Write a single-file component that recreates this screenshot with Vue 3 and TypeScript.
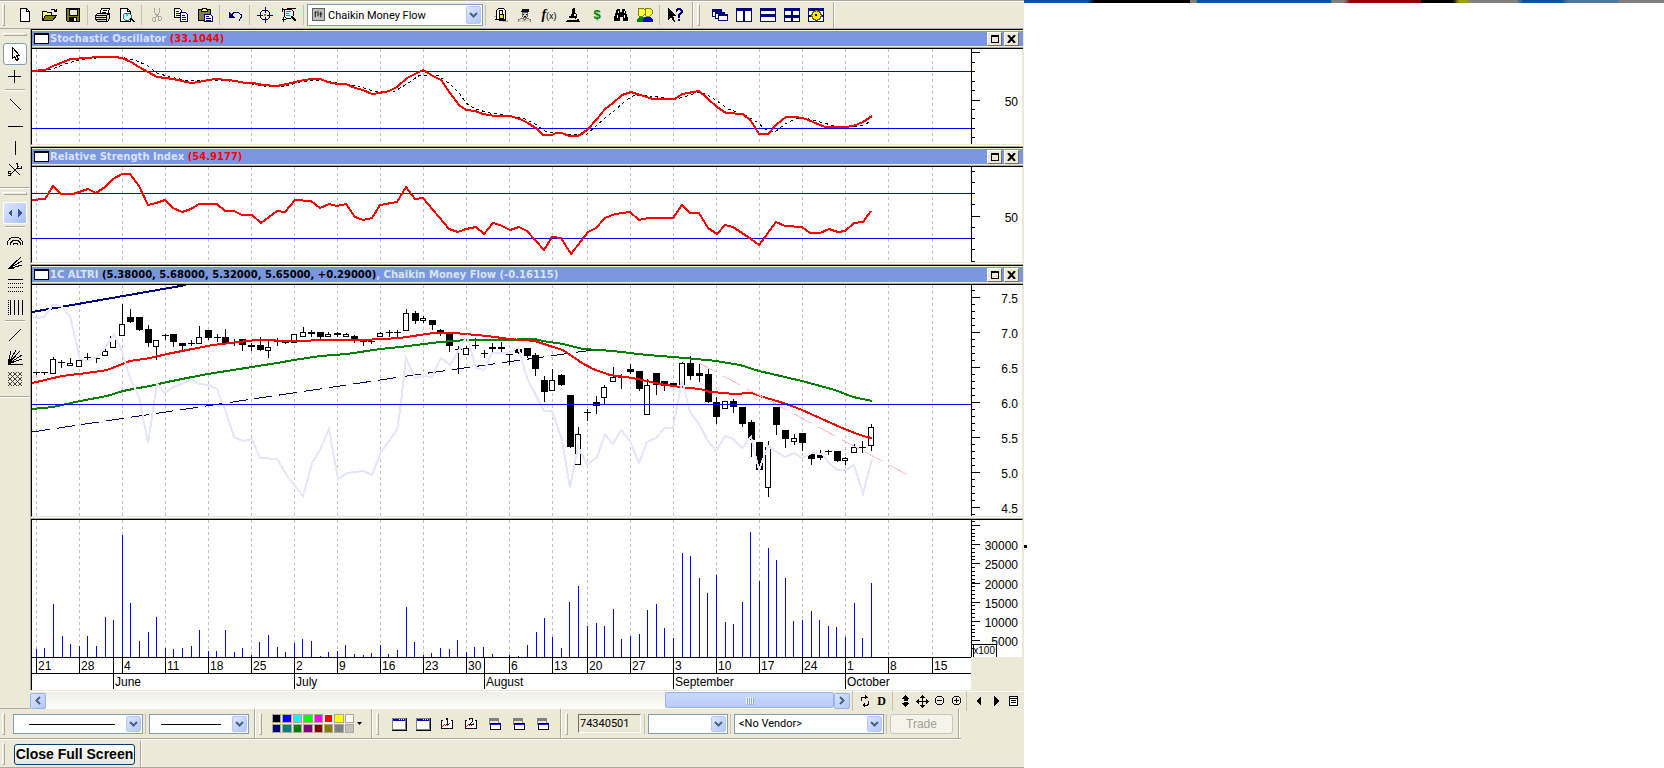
<script setup lang="ts">
import { ref } from 'vue'

type Shape = [d: string, fill: string, stroke?: string]
type Tool = { icon: string; label: string } | null
type Candle = [x: number, high: number, top: number, bottom: number, low: number, kind: 'f' | 'h' | 'c']

const icons: Record<string, Shape[]> = {
  fresh: [['M3.5 1.5h6l3 3v10h-9z', '#fff', '#000'], ['M9.5 1.5v3h3', 'none', '#000']],
  open: [
    ['M1.5 13.5v-9h4l1 1h4v3', '#ffff80', '#000'],
    ['M1.5 13.5l3-5h11l-4 5z', '#808000', '#000'],
    ['M9.5 3.5l1-1h3l1 2M15.5 2v3M12.5 4.5h3', 'none', '#000'],
  ],
  save: [
    ['M1.5 1.5h13v13h-12l-1-1z', '#808000', '#000'],
    ['M4 2h8v6h-8z', '#ece9d8', '#000'],
    ['M4 10h8v4h-8z', '#000'],
    ['M9 11h2v3h-2z', '#ece9d8'],
  ],
  print: [
    ['M4.5 7.5l2-6h8l-2 6z', '#fff', '#000'],
    ['M8 3.5h4M7 5.5h4', 'none', '#000'],
    ['M.5 8.5l2-2h12v5l-2 3h-10l-2-2z', '#d8d4c4', '#000'],
    ['M.5 8.5h11v6M11.5 8.5l3-2M.5 10.5h11M.5 12.5h11', 'none', '#000'],
    ['M8 9h3v1h-3z', '#ffff00'],
  ],
  preview: [
    ['M1.5 1.5h7l3 3v10h-10z', '#fff', '#000'],
    ['M8.5 1.5v3h3', 'none', '#000'],
    ['M6 6h4l2 2v3l-2 2h-4l-2-2v-3z', '#c8f4f4', '#606060'],
    ['M11 11l4 4', 'none', '#000'],
    ['M12 11l4 4', 'none', '#000'],
    ['M7 7h2v2h-2z', '#00d8e8'],
  ],
  cut: [
    ['M5.5 1v4l3 5M10.5 1v4l-3 5', 'none', '#aca899'],
    ['M4.5 10.5h2v4h-2l-1-1v-2zM9.5 9.5h2l1 1v2l-1 1h-2z', 'none', '#aca899'],
  ],
  copy: [
    ['M1.5 1.5h5l2 2v7h-7z', '#fff', '#000'],
    ['M3 4.5h3M3 6.5h4M3 8.5h4', 'none', '#000080'],
    ['M7.5 5.5h5l2 2v7h-7z', '#fff', '#000080'],
    ['M9 8.5h3M9 10.5h4M9 12.5h4', 'none', '#000080'],
  ],
  paste: [
    ['M1.5 2.5h12v11h-12z', '#808040', '#000'],
    ['M4.5 3.5l1-2h4l1 2v1h-6z', '#ffff80', '#000'],
    ['M7.5 7.5h6l2 2v5h-8z', '#fff', '#000080'],
    ['M9 9.5h3M9 11.5h5M9 13h5', 'none', '#000080'],
  ],
  undo: [
    ['M5 7.5l2-2h4l3 2v3l-2 3', 'none', '#000080'],
    ['M2 5v6h6z', '#000080'],
  ],
  target: [
    ['M5.5 3.5h5l2 2v5l-2 2h-5l-2-2v-5z', 'none', '#000'],
    ['M8 0v6M8 10v6M0 8h6M10 8h6', 'none', '#000080'],
    ['M7 7h2v2h-2z', '#808080'],
  ],
  inspect: [
    ['M1.5 1v4M1 2.5h3M2.5 15v-5M.5 12.5h4M5.5 1.5h9', 'none', '#000'],
    ['M5 2h5l2 2v5l-2 2h-5l-2-2v-5z', '#d8f4f4', '#000'],
    ['M5 4.5h5M5 6.5h3M5 8.5h4', 'none', '#00a0a8'],
    ['M10.5 9.5l5 5M11.5 9.5l4 4M10.5 10.5l4 4', 'none', '#000'],
  ],
  lock: [
    ['M3.5 12.5v-9l2-2h5l2 2v9z', '#fff', '#000'],
    ['M6.5 8v-4l1-1h1l1 1v4', 'none', '#000'],
    ['M6 7h4v4h-4z', '#e8e800', '#000'],
    ['M2 12h9v1h2v1h-7v-1h-4z', '#000'],
    ['M10 14.5h4v-2M1 9.5h2', 'none', '#aca899'],
  ],
  expert: [
    ['M5 2h6v2h-6z', '#000080', '#000'],
    ['M4 4.5h8', 'none', '#000'],
    ['M5.5 5.5h5v4l-1 1h-3l-1-1z', '#d8d4c4', '#606060'],
    ['M6 7.5h1M9 7.5h1M7 9h2', 'none', '#000'],
    ['M1.5 15v-2l3-2h1l2 2 2-2h1l3 2v2', '#d8d4c4', '#808080'],
  ],
  scope: [
    ['M8 1h2v3l-1 6h-3l1-6z', '#000'],
    ['M4 9h7v2h-7zM2 13h10v-1h2v3h-12z', '#000'],
    ['M9.5 5.5l2 2v3l-2 2', 'none', '#000'],
    ['M1 14.5h14', 'none', '#000'],
  ],
  find: [
    ['M4 2h3v3h2v-3h3l1 3 2 6v3h-5v-4h-3v4h-6v-3l2-6z', '#000'],
    ['M5 4v2M4 8v3M11 4v2M11 8v3', 'none', '#fff'],
  ],
  users: [
    ['M2 1h4l2 2v4l-2 2h-4l-1-2v-4z', '#ffff40', '#808000'],
    ['M9 1h4l2 2v4l-2 2h-4l-1-2v-4z', '#ffff40', '#808000'],
    ['M0 15v-3l2-2h5l2 2v3z', '#008000'],
    ['M6 15v-3l3-2h4l3 2v3z', '#0000c8'],
  ],
  help: [
    ['M1 1v12l3-3 3 5 1-1-2-5h4z', '#000'],
    ['M9 4.5l1-2 1-1h2l2 2v2l-3 3v2M12 12v2', 'none', '#000080'],
    ['M10 3.5l1-1h2l1 1v2l-3 3v2M11 12v2', 'none', '#000080'],
  ],
  cascade: [
    ['M.5 2.5h9v7h-9z', '#fff', '#000080'], ['M0 2h10v3h-10z', '#000080'],
    ['M3.5 5.5h9v6h-9z', '#fff', '#000080'], ['M3 5h10v2h-10z', '#000080'],
    ['M6.5 7.5h9v6h-9z', '#fff', '#000080'], ['M6 7h10v2h-10z', '#000080'],
  ],
  columns: [['M.5 1.5h15v13h-15z', '#fff', '#000080'], ['M0 1h16v3h-16zM7 2h2v13h-2z', '#000080']],
  rows: [['M.5 1.5h15v13h-15z', '#fff', '#000080'], ['M0 1h16v3h-16zM0 7h16v3h-16z', '#000080']],
  tiles: [['M.5 1.5h15v13h-15z', '#fff', '#000080'], ['M0 1h16v3h-16zM0 8h16v3h-16zM7 1h2v14h-2z', '#000080']],
  gear: [
    ['M.5 1.5h15v13h-15z', '#fff', '#000080'], ['M0 1h16v3h-16zM0 8h16v2h-16z', '#000080'],
    ['M7 3h2v1h2v1h1v2h1v2h-1v2h-1v1h-2v1h-2v-1h-2v-1h-1v-2h-1v-2h1v-2h1v-1h2z', '#ffe800', '#606000'],
    ['M7 7h2v2h-2z', '#000'],
  ],
  pointer: [['M5.5 1.5v11l2-2 2 4 2-1-2-4h3z', '#fff', '#000']],
  cross: [['M7.5 2v13M1 8.5h13', 'none', '#000']],
  falling: [['M3 3l11 11', 'none', '#000']],
  level: [['M1 8.5h15', 'none', '#000']],
  upright: [['M8.5 1v14', 'none', '#000']],
  ratio: [
    ['M2 2l11 11M3 13l9-9', 'none', '#000'],
    ['M9 1.5h2M10.5 1v5h4v-2M4 9.5h-2.5v2h2v2h-2.5', 'none', '#000'],
  ],
  nav: [['M5 4v8l-4-4zM11 4v8l4-4z', '#38548c']],
  arcs: [
    ['M.5 12v-3l2-3 3-2h5l3 2 2 3v3M3.500 12v-2l2-2 2-1h2l2 1 2 2v2M6.500 12v-1l1-1h2l1 1v1', 'none', '#000'],
  ],
  fan: [['M1 14L14 2M1 14L15 6M1 14L15 10M1 13.5h6', 'none', '#000']],
  hlines: [['M1 2.5h15', 'none', '#000'], ['M1 6h1m1 0h1m1 0h1m1 0h1m1 0h1m1 0h1m1 0h1m1 0h1M1 10h1m1 0h1m1 0h1m1 0h1m1 0h1m1 0h1m1 0h1m1 0h1M1 14h1m1 0h1m1 0h1m1 0h1m1 0h1m1 0h1m1 0h1m1 0h1', 'none', '#000']],
  vlines: [['M3.5 1v15M7.5 1v15M11.5 1v15M15.5 1v15', 'none', '#000'], ['M1 1v1m0 1v1m0 1v1m0 1v1m0 1v1m0 1v1m0 1v1m0 1v1', 'none', '#000']],
  rising: [['M2 14L14 2', 'none', '#000']],
  rays: [['M1 15L4 2M1 15L9 1M1 15L13 2M1 15L15 6M1 15L15 10M1 15.5h15', 'none', '#000']],
  hatch: [['M1 1l14 14M1 6l9 9M1 11l4 4M6 1l9 9M11 1l4 4M15 1L1 15M10 1L1 10M5 1L1 5M15 6l-9 9M15 11l-4 4', 'none', '#404040']],
  win: [['M1 2h15v13h-15z', '#808080'], ['M2 5h13v9h-13z', '#fff'], ['M2 3h13v2h-13z', '#0000c0'], ['M9 3.5h1m1 0h1m1 0h1', 'none', '#fff'], ['M1 15.5h15.5v-13', 'none', '#000']],
  one: [['M4.5 4.5h-2v9h12v-9h-2', '#fff', '#000'], ['M3 12l3-3 2 2 4-4', 'none', '#f00'], ['M7 3.5h1v-1h1v6M7 9.5h4', 'none', '#000']],
  two: [['M4.5 4.5h-2v9h12v-9h-2', '#fff', '#000'], ['M3 12l3-3 2 2 4-4', 'none', '#f00'], ['M6.5 4v-1.5h4v3l-4 4h5', 'none', '#000']],
  stack: [['M2 2h11v3h-11z', '#808080'], ['M2.5 3v7M12.5 3v4', 'none', '#808080'], ['M3.5 7.5h11v7h-11z', '#fff', '#000'], ['M3 7h12v2h-12z', '#000'], ['M4 8.5h10', 'none', '#0000ff']],
  refresh: [['M4.5 8v-3l1-1h5M8.5 2v4M11.5 8v3l-1 1h-5M7.5 10v4M9.5 3v2M6.5 11v2', 'none', '#000']],
  stretch: [['M8.5 2l4 4h-2v4h2l-4 4-4-4h2v-4h-2z', '#000'], ['M5 8h7', 'none', '#ece9d8']],
  move: [['M8.5 2l2.500 3h-5zM8.500 15l2.500-3h-5zM2 8.500l3-2.500v5zM15 8.500l-3-2.500v5z', '#000'], ['M8.5 3v11M3 8.5h11', 'none', '#000']],
  minus: [['M6.5 3.5h4l2 2v4l-2 2h-4l-2-2v-4z', 'none', '#000'], ['M6 7.5h5', 'none', '#000']],
  plus: [['M6.5 3.5h4l2 2v4l-2 2h-4l-2-2v-4z', 'none', '#000'], ['M6 7.5h5M8.5 5v5', 'none', '#000']],
  back: [['M10 3v10l-5-5z', '#000']],
  forward: [['M6 3v10l5-5z', '#000']],
  sheet: [['M4.5 3.5h8v9h-8z', '#fff', '#000'], ['M4 5.5h9M6 7.5h5M6 9.5h5', 'none', '#000']],
}

const fileTools: Tool[] = [
  { icon: 'fresh', label: 'New' }, { icon: 'open', label: 'Open' }, { icon: 'save', label: 'Save' }, null,
  { icon: 'print', label: 'Print' }, { icon: 'preview', label: 'Print preview' }, null,
  { icon: 'cut', label: 'Cut' }, { icon: 'copy', label: 'Copy' }, { icon: 'paste', label: 'Paste' }, null,
  { icon: 'undo', label: 'Undo' }, null,
  { icon: 'target', label: 'Crosshair' }, { icon: 'inspect', label: 'Inspect data' },
]
const analysisTools: Tool[] = [
  { icon: 'lock', label: 'Security' }, { icon: 'expert', label: 'Expert advisor' },
  { icon: 'fx', label: 'Indicator builder' }, { icon: 'scope', label: 'Explorer' },
  { icon: 'dollar', label: 'System tester' }, { icon: 'find', label: 'Find' },
  { icon: 'users', label: 'Users' }, null, { icon: 'help', label: 'Help pointer' },
]
const windowTools = [
  { icon: 'cascade', label: 'Cascade' }, { icon: 'columns', label: 'Tile columns' },
  { icon: 'rows', label: 'Tile rows' }, { icon: 'tiles', label: 'Tile all' }, { icon: 'gear', label: 'Layout options' },
]
const drawTools: Tool[] = [
  { icon: 'pointer', label: 'Select' }, { icon: 'cross', label: 'Cross' }, null,
  { icon: 'falling', label: 'Trendline' }, { icon: 'level', label: 'Horizontal line' },
  { icon: 'upright', label: 'Vertical line' }, { icon: 'ratio', label: 'Stop and limit' },
]
const studyTools: Tool[] = [
  { icon: 'nav', label: 'Scroll tools' }, null,
  { icon: 'arcs', label: 'Fibonacci arcs' }, { icon: 'fan', label: 'Fibonacci fan' },
  { icon: 'hlines', label: 'Retracement' }, { icon: 'vlines', label: 'Time zones' }, null,
  { icon: 'rising', label: 'Gann line' }, { icon: 'rays', label: 'Gann fan' }, { icon: 'hatch', label: 'Gann grid' },
]
const viewTools: Tool[] = [
  null, { icon: 'refresh', label: 'Refresh' }, { icon: 'daily', label: 'Daily' }, null,
  { icon: 'stretch', label: 'Rescale' }, { icon: 'move', label: 'Pan' },
  { icon: 'minus', label: 'Zoom out' }, { icon: 'plus', label: 'Zoom in' }, null,
  { icon: 'back', label: 'Previous' }, { icon: 'forward', label: 'Next' }, { icon: 'sheet', label: 'Properties' },
]
const templateTools = [
  { icon: 'win', label: 'Template' }, { icon: 'win', label: 'Save template' }, { icon: 'one', label: 'Chart one' },
  { icon: 'two', label: 'Chart two' }, { icon: 'stack', label: 'Bring forward' },
  { icon: 'stack', label: 'Send back' }, { icon: 'stack', label: 'Arrange' },
]
const swatches = [
  '#000000', '#0000ff', '#00ffff', '#00ff00', '#ff00ff', '#ff0000', '#ffff00', '#ffffff',
  '#000080', '#008080', '#008000', '#800080', '#800000', '#808000', '#808080', '#c0c0c0',
]
const pen = ref('#ff0000')

const weeks = [36, 79, 122, 165, 208, 251, 294, 337, 380, 423, 466, 509, 552, 587, 630, 673, 716, 759, 802, 845, 888, 932]
const dates = [21, 28, 4, 11, 18, 25, 2, 9, 16, 23, 30, 6, 13, 20, 27, 3, 10, 17, 24, 1, 8, 15]
const months = [
  { x: 113, name: 'June' }, { x: 294, name: 'July' }, { x: 484, name: 'August' },
  { x: 673, name: 'September' }, { x: 845, name: 'October' },
]
const pct = (x: number) => `${((x - 32) / 939) * 100}%`

const stoch = '32,71 45,70 53,66 71,59 87,58 97,57 115,57 122,58 131,62 139,67 148,72 157,77 166,78 173,79 191,83 199,82 208,80 217,79 227,80 236,81 245,83 253,83 263,85 277,86 287,84 295,82 304,80 312,79 320,79 328,82 337,84 346,84 355,88 363,90 372,94 380,93 389,91 397,87 407,78 423,70 433,76 441,80 450,93 459,105 466,110 475,111 483,114 495,116 510,116 520,119 528,123 537,129 543,135 552,135 556,133 562,133 569,136 578,136 587,130 597,119 605,109 613,103 622,95 631,92 640,95 653,99 675,99 682,94 699,91 707,98 717,107 726,113 743,114 751,121 759,134 768,134 777,124 786,117 795,117 803,118 813,122 825,127 845,127 853,126 863,122 872,116'
const signal = '36,71 53,69 62,65 75,61 87,59 105,57 120,57 135,60 148,66 157,73 170,77 190,81 208,80 217,80 240,82 270,87 285,86 300,82 320,80 340,83 358,86 370,90 380,92 395,91 407,84 420,75 437,75 450,84 460,94 466,103 475,109 490,113 510,116 525,119 535,124 545,131 555,133 570,135 587,134 597,125 605,118 615,110 625,101 635,95 650,96 665,98 680,98 700,92 707,95 717,101 728,109 745,115 757,122 765,129 775,132 785,124 795,119 805,118 820,122 835,126 850,127 864,125 871,121'
const rsi = '32,200 45,199 53,186 61,194 73,194 88,189 96,193 105,187 113,179 122,174 130,174 139,186 148,205 156,203 165,200 173,208 182,212 191,209 199,204 217,204 225,211 234,211 242,215 252,215 261,223 269,217 277,211 285,212 295,200 311,201 320,208 329,204 337,206 346,204 355,217 363,220 372,218 380,205 397,202 406,187 415,199 423,198 449,229 458,232 466,229 476,227 484,234 493,223 500,225 510,230 519,227 527,231 544,250 552,237 561,238 571,254 588,232 596,228 605,218 615,214 630,212 639,220 648,218 673,218 682,205 690,213 699,213 708,228 717,234 725,225 733,227 751,239 759,245 776,222 785,226 802,227 810,233 820,233 829,229 838,232 845,231 854,223 863,222 871,211'
const fastAverage = '32,383 62,376 87,373 107,370 130,361 150,358 167,354 187,350 213,345 230,343 257,340 294,341 328,340 363,340 400,338 433,333 455,333 487,336 510,339 535,341 553,347 563,350 582,363 593,369 610,375 633,378 660,384 680,387 700,389 710,392 725,393 733,394 752,393 763,397 777,401 792,406 802,410 840,427 857,434 867,437 872,438'
const slowAverage = '32,409 53,407 80,401 107,396 123,391 133,389 150,386 167,382 187,378 208,374 233,370 252,367 277,363 294,360 320,356 347,354 380,349 400,347 440,342 467,340 500,340 535,339 543,341 563,344 583,349 613,351 647,355 673,357 707,360 716,361 740,365 759,371 802,381 835,390 853,397 872,401'
const moneyFlow = '32,316 36,318 44,317 53,305 61,306 70,316 80,359 87,361 97,357 106,347 114,334 122,352 131,381 139,397 148,443 157,384 165,393 173,387 182,384 191,379 199,384 208,385 217,389 226,412 234,437 243,441 252,439 260,458 277,459 287,476 303,496 312,463 320,450 329,429 338,479 347,473 363,471 372,475 381,452 397,430 400,411 406,358 415,378 423,376 432,377 441,358 450,365 458,352 467,336 476,368 484,370 492,353 510,353 518,347 527,378 544,411 552,411 562,440 570,488 578,446 587,465 597,457 605,435 613,444 621,430 630,441 639,463 647,442 656,438 665,428 673,428 682,380 690,412 699,424 708,441 716,451 725,436 733,439 742,448 751,437 759,470 768,446 777,452 785,457 794,453 802,458 812,453 822,454 828,462 837,470 846,470 854,465 863,494 872,459'

const candles: Candle[] = [
  [36, 372, 372, 372, 374, 'c'], [44, 372, 372, 372, 374, 'c'], [53, 357, 359, 373, 373, 'h'], [61, 360, 362, 362, 367, 'c'],
  [70, 358, 363, 365, 365, 'h'], [79, 360, 360, 366, 366, 'h'], [87, 353, 357, 357, 361, 'c'], [96, 358, 358, 358, 362, 'c'],
  [105, 349, 351, 355, 355, 'h'], [113, 333, 336, 347, 347, 'h'], [122, 304, 324, 335, 335, 'h'], [130, 309, 317, 322, 322, 'f'],
  [139, 317, 317, 330, 330, 'f'], [148, 325, 329, 343, 346, 'f'], [156, 340, 340, 346, 359, 'h'], [165, 334, 335, 335, 339, 'c'],
  [173, 334, 334, 342, 346, 'f'], [182, 343, 343, 346, 349, 'f'], [191, 340, 343, 343, 345, 'c'], [199, 326, 337, 343, 343, 'h'],
  [208, 330, 330, 338, 339, 'f'], [217, 334, 337, 337, 341, 'c'], [225, 329, 337, 343, 343, 'f'], [234, 339, 342, 342, 345, 'c'],
  [242, 339, 339, 345, 350, 'f'], [251, 343, 345, 347, 350, 'f'], [260, 337, 345, 350, 350, 'f'], [268, 341, 347, 350, 357, 'h'],
  [277, 338, 341, 341, 345, 'c'], [285, 340, 340, 343, 343, 'f'], [294, 334, 334, 342, 342, 'h'], [303, 327, 332, 336, 336, 'h'],
  [311, 330, 332, 334, 336, 'f'], [320, 332, 332, 337, 339, 'f'], [328, 332, 334, 336, 336, 'h'], [337, 332, 333, 335, 336, 'f'],
  [346, 333, 334, 336, 336, 'h'], [354, 335, 336, 339, 342, 'f'], [363, 339, 341, 341, 345, 'c'], [371, 341, 341, 341, 343, 'c'],
  [380, 332, 333, 336, 336, 'h'], [389, 330, 332, 332, 336, 'c'], [397, 330, 332, 332, 336, 'c'], [406, 309, 313, 330, 330, 'h'],
  [415, 311, 313, 321, 323, 'f'], [423, 316, 318, 320, 322, 'h'], [432, 320, 320, 325, 329, 'f'], [440, 329, 330, 333, 335, 'f'],
  [449, 333, 333, 346, 351, 'f'], [458, 346, 349, 349, 373, 'c'], [466, 346, 348, 354, 354, 'h'], [475, 338, 345, 345, 348, 'c'],
  [484, 350, 353, 353, 357, 'c'], [492, 343, 347, 349, 353, 'f'], [501, 342, 347, 349, 351, 'f'], [509, 354, 354, 354, 364, 'c'],
  [518, 349, 349, 353, 353, 'f'], [527, 348, 348, 356, 357, 'f'], [535, 353, 355, 369, 375, 'f'], [544, 376, 380, 392, 401, 'f'],
  [552, 369, 380, 390, 390, 'h'], [561, 374, 375, 385, 385, 'f'], [570, 395, 395, 447, 447, 'f'], [578, 427, 434, 464, 464, 'h'],
  [587, 409, 412, 412, 420, 'c'], [596, 396, 402, 406, 413, 'f'], [604, 385, 387, 397, 403, 'h'], [613, 367, 377, 381, 381, 'h'],
  [621, 374, 377, 377, 388, 'c'], [630, 364, 369, 372, 373, 'f'], [639, 371, 371, 389, 390, 'f'], [647, 379, 385, 414, 414, 'h'],
  [656, 373, 373, 385, 394, 'f'], [664, 381, 381, 386, 390, 'f'], [673, 383, 383, 385, 385, 'f'], [682, 362, 363, 384, 384, 'h'],
  [690, 356, 363, 376, 379, 'f'], [699, 363, 373, 376, 381, 'f'], [708, 369, 374, 402, 402, 'f'], [716, 397, 402, 417, 423, 'f'],
  [725, 401, 401, 408, 408, 'h'], [733, 399, 401, 407, 412, 'f'], [742, 407, 407, 424, 426, 'f'], [751, 420, 422, 440, 456, 'f'],
  [759, 442, 442, 470, 470, 'f'], [768, 441, 447, 487, 496, 'h'], [776, 407, 407, 425, 434, 'f'], [785, 430, 430, 439, 447, 'f'],
  [794, 434, 438, 441, 444, 'h'], [802, 433, 433, 443, 450, 'f'], [811, 452, 454, 459, 464, 'f'], [820, 450, 454, 458, 459, 'f'],
  [828, 450, 451, 451, 454, 'c'], [837, 451, 451, 461, 461, 'f'], [845, 457, 458, 460, 464, 'h'], [854, 444, 447, 452, 452, 'h'],
  [862, 441, 447, 447, 452, 'c'], [871, 424, 427, 445, 450, 'h'],
]

// Bar heights above the volume baseline, one list per trading week
const volumes = [
  [8, 9, 53, 21, 13], [11, 21, 11, 40, 37], [122, 54, 16, 25, 40], [9, 8, 9, 11, 27], [6, 6, 27, 5, 9],
  [2, 15, 22, 10, 5], [14, 18, 16, 1, 5], [6, 12, 3, 2, 4], [12, 3, 7, 50, 15], [2, 4, 9, 8, 17],
  [5, 10, 10, 3, 0], [2, 1, 12, 25, 39], [20, 9, 55, 71], [31, 34, 31, 48, 18], [21, 23, 47, 53, 29],
  [19, 104, 101, 79, 64], [82, 35, 33, 55, 125], [76, 109, 97, 79, 36], [37, 46, 37, 31, 30], [20, 54, 19, 74],
]
const offsets = [0, 9, 17, 26, 34]
const bars = volumes.flatMap((week, w) =>
  week.map((height, day) => ({ x: weeks[w] + offsets[day] - (w < 11 && day === 1 ? 1 : 0) + (w === 11 && day > 1 ? 1 : 0), height })),
)

const stochTicks = [62, 71, 81, 90, 109, 118, 128, 137]
const rsiTicks = [171, 182, 193, 204, 227, 238, 249, 261]
const priceMarks = ['7.5', '7.0', '6.5', '6.0', '5.5', '5.0', '4.5'].map((label, i) => ({ label, y: 297 + i * 35 }))
const priceTicks = Array.from({ length: 33 }, (_, i) => 290 + i * 7)
const volumeMarks = ['', '30000', '25000', '20000', '15000', '10000', '5000'].map((label, i) => ({ label, y: Math.round(525 + i * 19.2) }))
const volumeTicks = Array.from({ length: 34 }, (_, i) => Math.round(521 + i * 3.84))
</script>

<template>
  <div class="desktop">
    <main class="app">
      <header class="topbar">
        <span class="grip"></span>
        <template v-for="(t, i) in fileTools" :key="i">
          <button v-if="t" class="tool" type="button" :aria-label="t.label">
            <svg class="icon" viewBox="0 0 16 16"><path v-for="(s, n) in icons[t.icon]" :key="n" :d="s[0]" :fill="s[1]" :stroke="s[2] ?? 'none'" /></svg>
          </button>
          <span v-else class="sep"></span>
        </template>
        <span class="sep"></span>
        <span class="combo indicator">
          <span class="combo-icon"><svg viewBox="0 0 12 12"><path d="M2.500 3v6M2 3.500h2M5.500 2v6M8.500 3v6M7 5.500h3" fill="none" stroke="#000" /></svg></span>
          <select aria-label="Indicator"><option>Chaikin Money Flow</option></select>
          <span class="arrow"><svg viewBox="0 0 9 6"><path d="M1 1l3.500 3.500L8 1" /></svg></span>
        </span>
        <span class="sep"></span>
        <template v-for="(t, i) in analysisTools" :key="i">
          <button v-if="t" class="tool" type="button" :aria-label="t.label">
            <span v-if="t.icon === 'fx'" class="fx">f<small>(x)</small></span>
            <span v-else-if="t.icon === 'dollar'" class="dollar">$</span>
            <svg v-else class="icon" viewBox="0 0 16 16"><path v-for="(s, n) in icons[t.icon]" :key="n" :d="s[0]" :fill="s[1]" :stroke="s[2] ?? 'none'" /></svg>
          </button>
          <span v-else class="sep"></span>
        </template>
        <span class="band-end"></span>
        <span class="grip"></span>
        <button v-for="t in windowTools" :key="t.icon" class="tool" type="button" :aria-label="t.label">
          <svg class="icon" viewBox="0 0 16 16"><path v-for="(s, n) in icons[t.icon]" :key="n" :d="s[0]" :fill="s[1]" :stroke="s[2] ?? 'none'" /></svg>
        </button>
        <span class="band-end"></span>
      </header>

      <div class="middle">
        <aside class="sidebar">
          <div v-for="(group, g) in [drawTools, studyTools]" :key="g" class="side-group">
            <span class="side-grip"></span>
            <template v-for="(t, i) in group" :key="i">
              <button v-if="t" class="side-tool" :class="t.icon" type="button" :aria-label="t.label">
                <svg class="icon" viewBox="0 0 16 16"><path v-for="(s, n) in icons[t.icon]" :key="n" :d="s[0]" :fill="s[1]" :stroke="s[2] ?? 'none'" /></svg>
              </button>
              <span v-else class="side-sep"></span>
            </template>
          </div>
        </aside>

        <div class="workspace">
          <section class="pane">
            <div class="titlebar">
              <span class="title-icon"></span>
              <h2>Stochastic Oscillator <b class="hot">(33.1044)</b></h2>
              <button class="caption" type="button" aria-label="Maximize"><span class="max"></span></button>
              <button class="caption" type="button" aria-label="Close"><svg viewBox="0 0 9 8"><path d="M1 0l7 8M8 0l-7 8" /></svg></button>
            </div>
            <div class="plot short">
              <svg class="canvas" viewBox="32 49 939 95" preserveAspectRatio="none">
                <path v-for="x in weeks" :key="x" class="grid" :d="`M${x}.5 49v95`" />
                <path class="level" d="M32 71.5h939M32 128.5h939" />
                <polyline class="signal" :points="signal" />
                <polyline class="red" :points="stoch" />
              </svg>
              <svg class="scale" viewBox="971 49 51 95">
                <path class="rule" d="M971.5 49v95M971 52.5h9M971 100.5h9" />
                <path v-for="y in stochTicks" :key="y" class="rule" :d="`M971 ${y}.5h4`" />
                <text x="1018" y="106">50</text>
              </svg>
            </div>
          </section>

          <section class="pane">
            <div class="titlebar">
              <span class="title-icon"></span>
              <h2>Relative Strength Index <b class="hot">(54.9177)</b></h2>
              <button class="caption" type="button" aria-label="Maximize"><span class="max"></span></button>
              <button class="caption" type="button" aria-label="Close"><svg viewBox="0 0 9 8"><path d="M1 0l7 8M8 0l-7 8" /></svg></button>
            </div>
            <div class="plot short">
              <svg class="canvas" viewBox="32 167 939 95" preserveAspectRatio="none">
                <path v-for="x in weeks" :key="x" class="grid" :d="`M${x}.5 167v95`" />
                <path class="level" d="M32 193.5h939M32 238.5h939" />
                <polyline class="red" :points="rsi" />
              </svg>
              <svg class="scale" viewBox="971 167 51 95">
                <path class="rule" d="M971.5 167v95M971 216.5h9" />
                <path v-for="y in rsiTicks" :key="y" class="rule" :d="`M971 ${y}.5h4`" />
                <text x="1018" y="222">50</text>
              </svg>
            </div>
          </section>

          <section class="pane">
            <div class="titlebar">
              <span class="title-icon"></span>
              <h2>1C ALTRI <b class="dark">(5.38000, 5.68000, 5.32000, 5.65000, +0.29000)</b>, Chaikin Money Flow (-0.16115)</h2>
              <button class="caption" type="button" aria-label="Maximize"><span class="max"></span></button>
              <button class="caption" type="button" aria-label="Close"><svg viewBox="0 0 9 8"><path d="M1 0l7 8M8 0l-7 8" /></svg></button>
            </div>
            <div class="plot tall">
              <svg class="canvas" viewBox="32 285 939 231" preserveAspectRatio="none">
                <path v-for="x in weeks" :key="x" class="grid" :d="`M${x}.5 285v231`" />
                <path class="upper" d="M32 312L186 285" />
                <path class="lower" d="M32 432L400 377L600 349" />
                <g v-for="c in candles" :key="c[0]" class="candle">
                  <path :d="`M${c[0]}.5 ${c[1]}V${c[4] + 1}`" />
                  <path v-if="c[5] === 'c'" :d="`M${c[0] - 3} ${c[2]}.5h7`" />
                  <rect v-else-if="c[5] === 'h'" :x="c[0] - 2.5" :y="c[2] + 0.5" width="5" :height="c[3] - c[2]" fill="#fff" />
                  <rect v-else :x="c[0] - 2.5" :y="c[2] + 0.5" width="6" :height="Math.max(1, c[3] - c[2] - 1)" fill="#000" />
                </g>
                <polyline class="green" :points="slowAverage" />
                <polyline class="red" :points="fastAverage" />
                <polyline class="flow" :points="moneyFlow" />
                <path class="pink" d="M699 363L906 474" />
                <path class="level" d="M32 404.5h939" />
              </svg>
              <svg class="scale" viewBox="971 285 51 231">
                <path class="rule" d="M971.5 285v231" />
                <path v-for="y in priceTicks" :key="y" class="rule" :d="`M971 ${y}.5h4`" />
                <g v-for="m in priceMarks" :key="m.y">
                  <path class="rule" :d="`M971 ${m.y}.5h9`" />
                  <text x="1018" :y="m.y + 6">{{ m.label }}</text>
                </g>
              </svg>
            </div>
          </section>

          <section class="pane volume">
            <div class="plot vol">
              <svg class="canvas" viewBox="32 520 939 137" preserveAspectRatio="none">
                <path v-for="x in weeks" :key="x" class="grid" :d="`M${x}.5 520v137`" />
                <path v-for="b in bars" :key="b.x" class="level" :d="`M${b.x}.5 657v-${b.height}`" />
              </svg>
              <svg class="scale" viewBox="971 520 51 137">
                <path class="rule" d="M971.5 520v137" />
                <path v-for="y in volumeTicks" :key="y" class="rule" :d="`M971 ${y}.5h4`" />
                <g v-for="m in volumeMarks" :key="m.y">
                  <path class="rule" :d="`M971 ${m.y}.5h9`" />
                  <text x="1018" :y="m.y + 6">{{ m.label }}</text>
                </g>
                <path d="M973.5 644.5h23v13h-23z" fill="#fff" stroke="#000" />
                <text class="unit" x="995" y="654">x100</text>
              </svg>
            </div>
          </section>
          <div class="calendar">
            <svg class="dates">
              <line x1="0" x2="100%" y1="0.5" y2="0.5" />
              <line x1="0" x2="100%" y1="16.5" y2="16.5" />
              <line v-for="x in weeks" :key="x" :x1="pct(x + 0.5)" :x2="pct(x + 0.5)" y1="0" y2="16" />
              <line v-for="m in months" :key="m.x" :x1="pct(m.x + 0.5)" :x2="pct(m.x + 0.5)" y1="0" y2="32" />
              <text v-for="(x, i) in weeks" :key="x" :x="pct(x + 2)" y="13">{{ dates[i] }}</text>
              <text v-for="m in months" :key="m.name" :x="pct(m.x + 2)" y="29">{{ m.name }}</text>
            </svg>
          </div>
          <div class="scroll-row">
            <button class="scroll-btn" type="button" aria-label="Scroll left"><svg viewBox="0 0 6 9"><path d="M5 1L1.500 4.500L5 8" /></svg></button>
            <div class="track"><span class="rest"></span><button class="thumb" type="button" aria-label="Scroll position"><i></i><i></i><i></i><i></i></button></div>
            <button class="scroll-btn" type="button" aria-label="Scroll right"><svg viewBox="0 0 6 9"><path d="M1 1l3.500 3.500L1 8" /></svg></button>
            <template v-for="(t, i) in viewTools" :key="i">
              <button v-if="t" class="view-tool" type="button" :aria-label="t.label">
                <span v-if="t.icon === 'daily'" class="daily">D</span>
                <svg v-else class="icon" viewBox="0 0 16 16"><path v-for="(s, n) in icons[t.icon]" :key="n" :d="s[0]" :fill="s[1]" :stroke="s[2] ?? 'none'" /></svg>
              </button>
              <span v-else class="sep"></span>
            </template>
          </div>
        </div>
      </div>

      <div class="bottombar">
        <span class="grip"></span>
        <span class="combo style"><span class="sample"></span><select aria-label="Line style"><option></option></select><span class="arrow"><svg viewBox="0 0 9 6"><path d="M1 1l3.500 3.500L8 1" /></svg></span></span>
        <span class="sep"></span>
        <span class="combo weight"><span class="sample"></span><select aria-label="Line weight"><option></option></select><span class="arrow"><svg viewBox="0 0 9 6"><path d="M1 1l3.500 3.500L8 1" /></svg></span></span>
        <span class="band-end"></span>
        <span class="grip"></span>
        <div class="palette">
          <button v-for="c in swatches" :key="c" class="swatch" :class="{ on: c === pen }" type="button" :aria-label="c" :style="{ backgroundColor: c }" @click="pen = c"></button>
        </div>
        <button class="more" type="button" aria-label="More colours"></button>
        <span class="band-end"></span>
        <span class="grip"></span>
        <button v-for="t in templateTools" :key="t.label" class="tool" type="button" :aria-label="t.label">
          <svg class="icon" viewBox="0 0 17 17"><path v-for="(s, n) in icons[t.icon]" :key="n" :d="s[0]" :fill="s[1]" :stroke="s[2] ?? 'none'" /></svg>
        </button>
        <span class="band-end"></span>
        <span class="grip"></span>
        <input class="account" aria-label="Account" value="74340501" readonly />
        <span class="sep"></span>
        <span class="combo order"><select aria-label="Order"><option></option></select><span class="arrow"><svg viewBox="0 0 9 6"><path d="M1 1l3.500 3.500L8 1" /></svg></span></span>
        <span class="sep"></span>
        <span class="combo vendor"><select aria-label="Vendor"><option>&lt;No Vendor&gt;</option></select><span class="arrow"><svg viewBox="0 0 9 6"><path d="M1 1l3.500 3.500L8 1" /></svg></span></span>
        <span class="sep"></span>
        <button class="trade" type="button" disabled>Trade</button>
        <span class="band-end"></span>
      </div>

      <footer class="closebar">
        <span class="grip"></span>
        <button class="close-full" type="button">Close Full Screen</button>
        <span class="band-end"></span>
      </footer>
    </main>
    <div class="beyond"><div class="strip"></div><span class="speck"></span></div>
  </div>
</template>

<style>
body {
  margin: 0;
  background: #fff;
}
</style>

<style scoped>
* {
  box-sizing: border-box;
}
.desktop {
  display: flex;
  align-items: flex-start;
  min-height: 100vh;
  font-family: 'Liberation Sans', Arial, sans-serif;
  font-size: 12px;
  color: #000;
}
.app {
  flex: 1024 1 0;
  min-width: 0;
  background: #ece9d8;
  overflow: hidden;
}
.beyond {
  flex: 640 1 0;
  position: relative;
  align-self: stretch;
  background: #fff;
}
.strip {
  height: 3px;
  background: linear-gradient(90deg, #0055a8 0 10%, #000 11% 26%, #808080 26% 27%, #0055a8 27% 48%, #808080 48% 50%, #900000 51% 62%, #000 62% 67%, #a0a000 68% 69%, #808080 70% 77%, #0055a8 78% 84%, #5078a0 85% 93%, #808080 93%);
}
.speck {
  position: absolute;
  left: 0;
  top: 545px;
  width: 3px;
  height: 3px;
  background: #000;
}
button {
  padding: 0;
  border: 0;
  background: none;
  font: inherit;
  color: inherit;
}
svg {
  display: block;
}
.icon {
  width: 16px;
  height: 16px;
  shape-rendering: crispEdges;
}
.topbar,
.bottombar,
.closebar {
  display: flex;
  align-items: center;
  white-space: nowrap;
}
.topbar {
  height: 28px;
  padding-top: 1px;
  border-top: 1px solid #aca899;
  box-shadow: inset 0 1px #fff;
}
.grip {
  flex: none;
  width: 3px;
  height: 22px;
  margin: 0 8px 0 2px;
  border: 1px solid #aca899;
  border-color: #fff #aca899 #aca899 #fff;
}
.tool {
  flex: none;
  display: flex;
  align-items: center;
  justify-content: center;
  width: 24px;
  height: 24px;
}
.sep {
  flex: none;
  width: 6px;
  height: 20px;
  background: linear-gradient(#c5c2b0, #c5c2b0) 2px 0 / 1px 100% no-repeat;
}
.band-end {
  flex: none;
  align-self: stretch;
  width: 8px;
  background: linear-gradient(90deg, #aca899 50%, #fff 50%) 5px 0 / 2px 100% no-repeat;
}
.fx {
  font: italic bold 14px/16px 'Liberation Serif', serif;
}
.fx small {
  font: 9px/10px 'Liberation Sans', sans-serif;
}
.dollar {
  color: #008000;
  font: bold 13px/16px 'Liberation Sans', sans-serif;
}
.combo {
  position: relative;
  flex: none;
  display: block;
  height: 20px;
}
.combo select {
  width: 100%;
  height: 100%;
  padding: 0 18px 0 4px;
  border: 1px solid #7f9db9;
  border-radius: 0;
  appearance: none;
  background: #fff;
  color: #000;
  font: 11px 'Roboto', 'Liberation Sans', sans-serif;
}
.arrow {
  position: absolute;
  top: 2px;
  right: 2px;
  bottom: 2px;
  width: 15px;
  display: flex;
  align-items: center;
  justify-content: center;
  border: 1px solid #b5c8f5;
  border-radius: 2px;
  background: linear-gradient(135deg, #dce6ff, #b0c8f8);
  pointer-events: none;
}
.arrow svg {
  width: 9px;
  height: 6px;
}
.arrow path,
.scroll-btn path {
  fill: none;
  stroke: #4d6185;
  stroke-width: 2;
}
.indicator {
  width: 176px;
  height: 22px;
}
.combo.indicator select {
  padding-left: 20px;
}
.combo-icon {
  position: absolute;
  left: 5px;
  top: 4px;
  width: 13px;
  height: 13px;
  border: 1px solid #606060;
  background: #c0c0c0;
  pointer-events: none;
}
.middle {
  display: flex;
}
.sidebar {
  flex: none;
  width: 30px;
  border-top: 1px solid #aca899;
  border-bottom: 1px solid #aca899;
}
.side-group {
  display: flex;
  flex-direction: column;
  align-items: center;
  padding-bottom: 6px;
  border-bottom: 1px solid #aca899;
  box-shadow: 0 1px #fff;
}
.side-grip {
  width: 24px;
  height: 3px;
  margin: 4px 0 7px;
  border: 1px solid #aca899;
  border-color: #fff #aca899 #aca899 #fff;
}
.side-tool {
  display: flex;
  align-items: center;
  justify-content: center;
  width: 24px;
  height: 22px;
}
.side-tool.pointer {
  border: 1px solid #7f9db9;
  border-radius: 3px;
  background: #fff;
}
.side-tool.nav {
  border: 1px solid #fff;
  border-radius: 2px;
  background: linear-gradient(135deg, #dce6ff, #a8c0fa);
}
.side-sep {
  width: 20px;
  height: 6px;
  background: linear-gradient(#aca899 50%, #fff 50%) 0 2px / 100% 2px no-repeat;
}
.workspace {
  flex: 1;
  min-width: 0;
  padding-right: 1px;
}
.pane {
  border-top: 1px solid #aca899;
  border-left: 1px solid #aca899;
  border-bottom: 1px solid #fff;
}
.titlebar {
  display: flex;
  align-items: center;
  height: 20px;
  padding: 0 4px 1px 2px;
  border: solid #000;
  border-width: 1px 0 1px 1px;
  background: #7a96df;
  box-shadow: inset 0 1px #ece9d8, inset 0 -1px #aca899, inset 0 -2px #ece9d8;
}
.title-icon {
  flex: none;
  width: 15px;
  height: 11px;
  border: 1px solid #000;
  border-top-width: 2px;
  background: #fff;
}
h2 {
  flex: 1;
  min-width: 0;
  margin: 0 0 0 1px;
  overflow: hidden;
  white-space: nowrap;
  color: #d8e4f8;
  font: bold 10px/16px 'DejaVu Sans', Verdana, sans-serif;
}
.hot {
  color: #f00;
}
.dark {
  color: #000;
}
.caption {
  display: flex;
  align-items: center;
  justify-content: center;
  width: 15px;
  height: 14px;
  margin-left: 2px;
  border: 1px solid #716f64;
  border-color: #fff #716f64 #716f64 #fff;
  background: #ece9d8;
}
.caption svg {
  width: 9px;
  height: 8px;
}
.caption path {
  stroke: #000;
  stroke-width: 2;
  fill: none;
}
.max {
  width: 8px;
  height: 8px;
  border: 1px solid #000;
  border-top-width: 2px;
}
.plot {
  display: flex;
  border-left: 1px solid #000;
  border-bottom: 1px solid #ece9d8;
  border-right: 1px solid #ece9d8;
  background: #fff;
}
.canvas {
  flex: 1;
  min-width: 0;
  height: 100%;
  shape-rendering: crispEdges;
}
.scale {
  flex: none;
  width: 51px;
  height: 100%;
}
.short {
  height: 96px;
}
.tall {
  height: 232px;
}
.vol {
  height: 138px;
  border-top: 1px solid #000;
  border-bottom: 0;
}
.volume {
  border-bottom: 0;
}
.scale text,
.dates text {
  font-size: 12px;
}
.scale text {
  text-anchor: end;
}
.scale .unit {
  font-size: 10px;
}
.rule {
  stroke: #000;
  shape-rendering: crispEdges;
}
.grid {
  stroke: #c0c0c0;
  stroke-dasharray: 3 3;
}
.level {
  stroke: #0000ff;
}
.red,
.green,
.flow {
  fill: none;
  stroke-width: 2;
}
.red {
  stroke: #ff0000;
}
.green {
  stroke: #008000;
}
.flow {
  stroke: #e6e6fa;
}
.signal {
  fill: none;
  stroke: #000;
  stroke-dasharray: 3 3;
}
.upper {
  stroke: #000080;
  stroke-width: 2;
}
.lower {
  fill: none;
  stroke: #000060;
  stroke-dasharray: 18 7;
}
.pink {
  stroke: #ffc0cb;
  stroke-dasharray: 19 8;
}
.candle {
  stroke: #000;
}
.calendar {
  margin-right: 51px;
  border: solid #ece9d8;
  border-width: 0 1px 1px 0;
  border-left: 1px solid #aca899;
  background: #fff;
}
.dates {
  width: 100%;
  height: 33px;
  border-left: 1px solid #000;
}
.dates line {
  stroke: #000;
  shape-rendering: crispEdges;
}
.scroll-row {
  display: flex;
  align-items: center;
  height: 18px;
  padding-right: 2px;
  border-top: 1px solid #fff;
}
.scroll-btn {
  flex: none;
  display: flex;
  align-items: center;
  justify-content: center;
  width: 16px;
  height: 16px;
  border: 1px solid #98b4ec;
  border-radius: 2px;
  background: linear-gradient(135deg, #dce6ff, #b0c8f8);
}
.scroll-btn svg {
  width: 6px;
  height: 9px;
}
.track {
  flex: 1;
  display: flex;
  height: 17px;
  background: linear-gradient(#f0efe8, #fefefb);
}
.rest {
  flex: 621 1 0;
}
.thumb {
  flex: 167 1 0;
  display: flex;
  align-items: center;
  justify-content: center;
  gap: 1px;
  height: 16px;
  border: 1px solid #98b4ec;
  border-radius: 2px;
  background: linear-gradient(#cad8fc, #b8cbf8);
}
.thumb i {
  width: 1px;
  height: 7px;
  background: #f0f5ff;
  box-shadow: 1px 1px #8ca8e8;
}
.view-tool {
  flex: none;
  display: flex;
  align-items: center;
  justify-content: center;
  width: 17px;
  height: 17px;
}
.daily {
  font: bold 12px/14px 'Liberation Serif', serif;
}
.bottombar {
  width: max-content;
  max-width: 100%;
  height: 30px;
  border-bottom: 1px solid #aca899;
  box-shadow: 0 1px #fff;
}
.style {
  width: 130px;
}
.weight {
  width: 100px;
}
.sample {
  position: absolute;
  left: 12%;
  right: 28px;
  top: 10px;
  height: 1px;
  background: #000;
  pointer-events: none;
}
.palette {
  display: grid;
  grid-template-columns: repeat(8, 1fr);
  gap: 1px;
  width: 82px;
  margin-left: 2px;
}
.swatch {
  height: 9px;
  border: 1px solid #aca899;
}
.swatch.on {
  border: 1px dotted #fff;
  background-clip: padding-box;
}
.more {
  width: 5px;
  height: 3px;
  margin: 0 4px 0 3px;
  background: #000;
  clip-path: polygon(0 0, 100% 0, 50% 100%);
}
.account {
  width: 63px;
  height: 19px;
  margin: 0 1px 0 2px;
  padding: 0 1px;
  border: 1px solid #716f64;
  border-color: #716f64 #fff #fff #716f64;
  border-radius: 0;
  background: #ece9d8;
  font: 11px 'Roboto', 'Liberation Sans', sans-serif;
}
.order {
  width: 80px;
}
.vendor {
  width: 150px;
}
.trade {
  width: 63px;
  height: 20px;
  border: 1px solid #c9c7ba;
  border-radius: 3px;
  background: #f5f4ea;
  color: #a1a192;
  font-size: 12px;
}
.closebar {
  height: 29px;
  padding-top: 2px;
  border-bottom: 1px solid #aca899;
}
.close-full {
  width: 121px;
  height: 21px;
  margin-left: 1px;
  border: 1px solid #003c74;
  border-radius: 3px;
  background: linear-gradient(#fff, #e8e6dc);
  font: bold 14px/18px 'Liberation Sans', sans-serif;
}
</style>
